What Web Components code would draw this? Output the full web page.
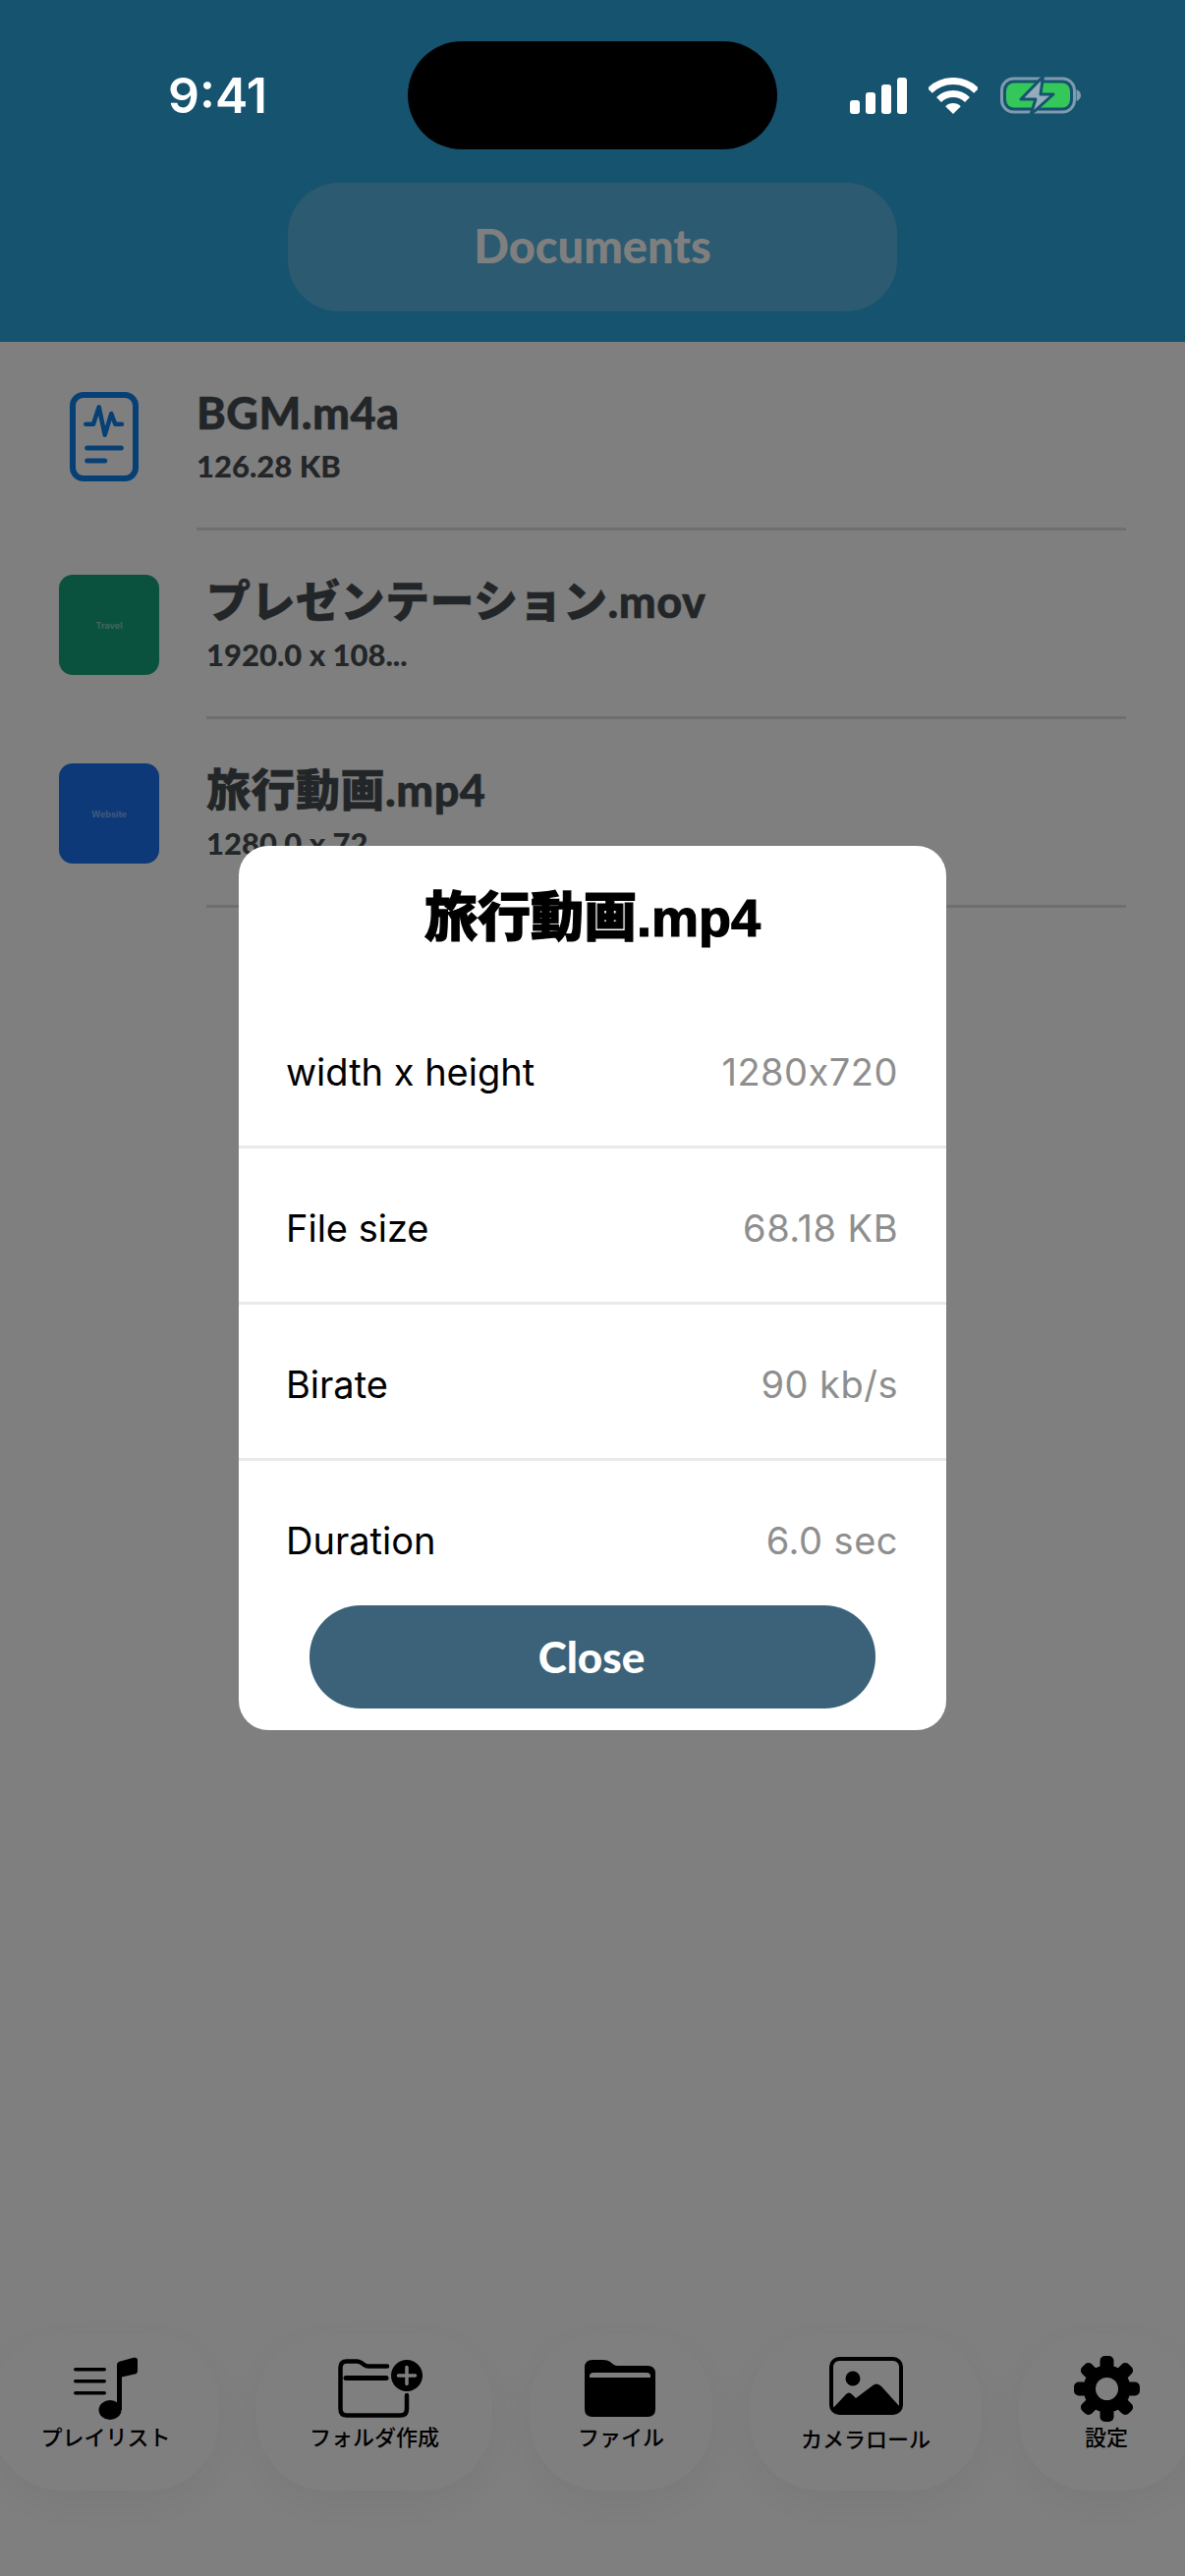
<!DOCTYPE html>
<html lang="ja">
<head>
<meta charset="UTF-8">
<title>Documents</title>
<style>
  html, body { margin: 0; padding: 0; }
  body {
    width: 1206px;
    height: 2622px;
    position: relative;
    overflow: hidden;
    background: #fff;
    display: flex;
    flex-direction: column;
    font-family: Lato, "Noto Sans CJK JP", sans-serif;
  }
  svg { display: block; }
</style>
</head>
<body>

<app-header heading="Documents">
  <status-bar time="9:41"></status-bar>
</app-header>

<file-list>
  <file-row name="BGM.m4a" info="126.28 KB" box="92">
    <svg slot="thumb" width="70" height="91" viewBox="0 0 70 91" fill="none" stroke="#0f80ea" stroke-linecap="round" stroke-linejoin="round">
      <rect x="3" y="3" width="64" height="85" rx="11" stroke-width="6"/>
      <path d="M16.3 32.7H24L29.7 15.3L35.7 43.7L42.3 22L46.3 32.7H53" stroke-width="4.5"/>
      <path d="M17.7 57H52.3M17.7 70H35.7" stroke-width="5"/>
    </svg>
  </file-row>
  <file-row name="プレゼンテーション.mov" info="1920.0 x 108..." box="102">
    <media-thumb slot="thumb" label="Travel" style="--bg:#14a47a"></media-thumb>
  </file-row>
  <file-row name="旅行動画.mp4" info="1280.0 x 72..." box="102">
    <media-thumb slot="thumb" label="Website" style="--bg:#1c72f0"></media-thumb>
  </file-row>
</file-list>

<tab-bar>
  <tab-item label="プレイリスト" style="--w:231px">
    <svg slot="icon" width="66" height="64" viewBox="0 0 66 64" fill="#000">
      <rect x="0" y="11" width="33" height="3.6" rx="1.8"/>
      <rect x="0" y="23" width="33" height="3.6" rx="1.8"/>
      <rect x="0" y="35" width="33" height="3.6" rx="1.8"/>
      <ellipse cx="37" cy="54" rx="11.5" ry="10"/>
      <path d="M44 54V8Q44 5.500 46.500 4.800L61 0.800Q65 0 65 3.500V14Q65 17 62 17.600L49 20.500V54Z"/>
    </svg>
  </tab-item>
  <tab-item label="フォルダ作成" style="--w:240px">
    <svg slot="icon" width="86" height="60" viewBox="0 0 86 60" fill="none" stroke="#000" style="margin-left:12px">
      <path d="M50 7.500H31Q28.500 7.500 26.500 6L23.500 3.800Q21.500 2.500 19 2.500H9Q2.500 2.500 2.500 9V51Q2.500 57.500 9 57.500H63.500Q70 57.500 70 51V37" stroke-width="4.500" stroke-linecap="round"/>
      <path d="M8 19.500H49" stroke-width="5" stroke-linecap="round"/>
      <circle cx="70" cy="17" r="16" fill="#000" stroke="none"/>
      <path d="M70 8.500V25.500M61.500 17H78.500" stroke="#fff" stroke-width="3.500" stroke-linecap="round"/>
    </svg>
  </tab-item>
  <tab-item label="ファイル" style="--w:186px">
    <svg slot="icon" width="72" height="58" viewBox="0 0 72 58" style="margin-right:3px">
      <path d="M8 0H19Q23 0 26 2L29 4.500Q31 6 34 6H64Q72 6 72 14V50Q72 58 64 58H8Q0 58 0 50V8Q0 0 8 0Z" fill="#000"/>
      <path d="M5 18V16.500Q5 13 9 13H63Q67 13 67 16.500V18Z" fill="#fff"/>
    </svg>
  </tab-item>
  <tab-item label="カメラロール" style="--w:236px;--top:19px;--label-gap:4px">
    <svg slot="icon" width="75" height="59" viewBox="0 0 75 59">
      <rect x="2" y="2" width="71" height="55" rx="8" fill="none" stroke="#000" stroke-width="4"/>
      <ellipse cx="24" cy="22" rx="7.500" ry="7.500" fill="#000"/>
      <path d="M4 52L17 38Q20 35 23 38L27 42L43 30Q48 25 53 30L72 51V55H4Z" fill="#000"/>
    </svg>
  </tab-item>
  <tab-item label="設定" style="--w:178px">
    <svg slot="icon" width="67" height="67" viewBox="0 0 67 67">
      <g fill="#000">
        <circle cx="33.500" cy="33.500" r="24"/>
        <rect x="26.500" y="0" width="14" height="67" rx="5"/>
        <rect x="26.500" y="0" width="14" height="67" rx="5" transform="rotate(45 33.500 33.500)"/>
        <rect x="26.500" y="0" width="14" height="67" rx="5" transform="rotate(90 33.500 33.500)"/>
        <rect x="26.500" y="0" width="14" height="67" rx="5" transform="rotate(135 33.500 33.500)"/>
      </g>
      <circle cx="33.500" cy="33.500" r="11.500" fill="#fff"/>
    </svg>
  </tab-item>
</tab-bar>

<info-modal heading="旅行動画.mp4" action="Close">
  <info-row label="width x height" value="1280x720"></info-row>
  <info-row label="File size" value="68.18 KB"></info-row>
  <info-row label="Birate" value="90 kb/s"></info-row>
  <info-row label="Duration" value="6.0 sec"></info-row>
</info-modal>

<script>
class StatusBar extends HTMLElement {
  constructor() {
    super();
    this.attachShadow({ mode: 'open' });
    this.shadowRoot.innerHTML = `
      <style>
        :host {
          display: grid;
          grid-template-columns: 415px 376px 415px;
          height: 144px;
          padding-top: 42px;
          align-items: start;
          position: relative;
          z-index: 20;
        }
        .time {
          height: 110px;
          display: flex;
          align-items: center;
          padding-left: 171px;
          font: 600 50px/1 Inter, sans-serif;
          color: #fff;
        }
        .island { height: 110px; border-radius: 55px; background: #000; }
        .icons {
          height: 110px;
          display: flex;
          align-items: center;
          padding-left: 74px;
          gap: 22px;
        }
        svg { display: block; }
      </style>
      <div class="time">${this.getAttribute('time')}</div>
      <div class="island"></div>
      <div class="icons">
        <svg width="58" height="37" viewBox="0 0 58 37" fill="#fff">
          <rect x="0" y="23" width="10" height="14" rx="3"/>
          <rect x="16" y="15" width="10" height="22" rx="3"/>
          <rect x="32" y="7" width="10" height="30" rx="3"/>
          <rect x="48" y="0" width="10" height="37" rx="3"/>
        </svg>
        <svg width="50" height="37" viewBox="0 0 50 37" fill="none" stroke="#fff" stroke-width="7">
          <path d="M1.300 13.300A33.500 33.500 0 0 1 48.700 13.300"/>
          <path d="M10.500 22.500A20.500 20.500 0 0 1 39.500 22.500"/>
          <path d="M25 37L17.200 29.200A11 11 0 0 1 32.800 29.200Z" fill="#fff" stroke="none"/>
        </svg>
        <svg width="82" height="39" viewBox="0 0 82 39" style="margin-left:1px">
          <rect x="1.500" y="2" width="74" height="34" rx="12" fill="none" stroke="#7f9bae" stroke-width="3"/>
          <path d="M77.500 13Q82 15 82 19Q82 23 77.500 25Z" fill="#7f9bae"/>
          <rect x="6" y="6.500" width="65" height="25" rx="8" fill="#34c759"/>
          <path d="M43.500 0L21 23H36L31 38.500L54 18H41Z" fill="#93adbb" stroke="#15536f" stroke-width="3" stroke-linejoin="round"/>
        </svg>
      </div>
    `;
  }
}
customElements.define('status-bar', StatusBar);

class AppHeader extends HTMLElement {
  constructor() {
    super();
    this.attachShadow({ mode: 'open' });
    this.shadowRoot.innerHTML = `
      <style>
        :host {
          display: block;
          height: 348px;
          background: #2aa6de;
          flex: none;
        }
        .pill {
          width: 620px;
          height: 131px;
          margin: 0 auto;
          padding-bottom: 3px;
          box-sizing: border-box;
          border-radius: 52px;
          background: #58b4e0;
          display: flex;
          align-items: center;
          justify-content: center;
          font: 900 47px/1 Lato, sans-serif;
          color: #fff;
        }
      </style>
      <slot></slot>
      <div class="pill">${this.getAttribute('heading')}</div>
    `;
  }
}
customElements.define('app-header', AppHeader);

class FileList extends HTMLElement {
  constructor() {
    super();
    this.attachShadow({ mode: 'open' });
    this.shadowRoot.innerHTML = `
      <style>
        :host { display: block; flex: none; }
      </style>
      <slot></slot>
    `;
  }
}
customElements.define('file-list', FileList);

class FileRow extends HTMLElement {
  constructor() {
    super();
    this.attachShadow({ mode: 'open' });
    this.shadowRoot.innerHTML = `
      <style>
        :host {
          display: flex;
          height: 192px;
          padding: 0 60px;
          gap: 48px;
          align-items: stretch;
        }
        .thumb {
          flex: none;
          width: ${this.getAttribute('box')}px;
          display: flex;
          align-items: center;
          justify-content: center;
        }
        .text {
          flex: 1;
          display: flex;
          flex-direction: column;
          justify-content: center;
          border-bottom: 3px solid #dedede;
          padding-top: 1px;
          box-sizing: border-box;
          color: #464c50;
        }
        .name {
          font: 900 45px/52px Lato, "Noto Sans CJK JP", sans-serif;
          letter-spacing: .5px;
          -webkit-text-stroke: .5px #464c50;
        }
        .info {
          font: 900 31px/36px Lato, sans-serif;
          margin-top: 10px;
        }
      </style>
      <div class="thumb"><slot name="thumb"></slot></div>
      <div class="text">
        <div class="name">${this.getAttribute('name')}</div>
        <div class="info">${this.getAttribute('info')}</div>
      </div>
    `;
  }
}
customElements.define('file-row', FileRow);

class MediaThumb extends HTMLElement {
  constructor() {
    super();
    this.attachShadow({ mode: 'open' });
    this.shadowRoot.innerHTML = `
      <style>
        :host {
          display: flex;
          width: 102px;
          height: 102px;
          border-radius: 14px;
          background: var(--bg);
          align-items: center;
          justify-content: center;
          font: 700 9px/1 Inter, sans-serif;
          color: rgba(255, 255, 255, .45);
        }
      </style>
      ${this.getAttribute('label')}
    `;
  }
}
customElements.define('media-thumb', MediaThumb);

class TabBar extends HTMLElement {
  constructor() {
    super();
    this.attachShadow({ mode: 'open' });
    this.shadowRoot.innerHTML = `
      <style>
        :host {
          display: flex;
          align-items: flex-start;
          gap: 38px;
          margin: auto 0 0 -8px;
          padding-bottom: 87px;
          flex: none;
        }
      </style>
      <slot></slot>
    `;
  }
}
customElements.define('tab-bar', TabBar);

class TabItem extends HTMLElement {
  constructor() {
    super();
    this.attachShadow({ mode: 'open' });
    this.shadowRoot.innerHTML = `
      <style>
        :host {
          display: flex;
          flex-direction: column;
          align-items: center;
          flex: none;
          box-sizing: border-box;
          width: var(--w);
          height: 160px;
          padding-top: var(--top, 22px);
          border-radius: 72px;
          background: #fff;
          box-shadow: 0 12px 44px rgba(0, 0, 0, .06);
        }
        .icon {
          height: 68px;
          display: flex;
          align-items: center;
          justify-content: center;
        }
        .label {
          margin-top: var(--label-gap, -1px);
          font: 500 22px/30px "Noto Sans CJK JP", sans-serif;
          color: #000;
          white-space: nowrap;
        }
      </style>
      <div class="icon"><slot name="icon"></slot></div>
      <div class="label">${this.getAttribute('label')}</div>
    `;
  }
}
customElements.define('tab-item', TabItem);

class InfoRow extends HTMLElement {
  constructor() {
    super();
    this.attachShadow({ mode: 'open' });
    this.shadowRoot.innerHTML = `
      <style>
        :host {
          display: flex;
          align-items: center;
          justify-content: space-between;
          box-sizing: border-box;
          height: 159px;
          padding: 6px 49px 0 48px;
          border-bottom: 3px solid #e9e9e9;
          font: 400 38px/1 Inter, sans-serif;
          font-feature-settings: "calt" 0;
          color: #000;
        }
        .value { color: #8e8e8e; letter-spacing: .5px; }
      </style>
      <div>${this.getAttribute('label')}</div>
      <div class="value">${this.getAttribute('value')}</div>
    `;
  }
}
customElements.define('info-row', InfoRow);

class InfoModal extends HTMLElement {
  constructor() {
    super();
    this.attachShadow({ mode: 'open' });
    this.shadowRoot.innerHTML = `
      <style>
        :host {
          display: flex;
          align-items: center;
          justify-content: center;
          position: absolute;
          inset: 0;
          z-index: 10;
          background: rgba(0, 0, 0, .5);
        }
        .card {
          width: 720px;
          height: 900px;
          border-radius: 30px;
          background: #fff;
          display: flex;
          flex-direction: column;
          overflow: hidden;
        }
        h1 {
          flex: none;
          height: 149px;
          margin: 0;
          padding-bottom: 4px;
          box-sizing: border-box;
          display: flex;
          align-items: center;
          justify-content: center;
          font: 900 54px/1 "Liberation Sans", "Noto Sans CJK JP", sans-serif;
          -webkit-text-stroke: 1.2px #000;
          color: #000;
        }
        .rows { flex: 1; min-height: 0; overflow: hidden; }
        .foot { flex: none; padding: 8px 72px 22px; }
        button {
          display: block;
          width: 100%;
          height: 105px;
          border: none;
          border-radius: 52px;
          background: #3b6278;
          padding: 0 2px 2px 0;
          color: #fff;
          font: 900 44px/1 Lato, sans-serif;
        }
      </style>
      <div class="card">
        <h1>${this.getAttribute('heading')}</h1>
        <div class="rows"><slot></slot></div>
        <div class="foot"><button>${this.getAttribute('action')}</button></div>
      </div>
    `;
  }
}
customElements.define('info-modal', InfoModal);
</script>
</body>
</html>
